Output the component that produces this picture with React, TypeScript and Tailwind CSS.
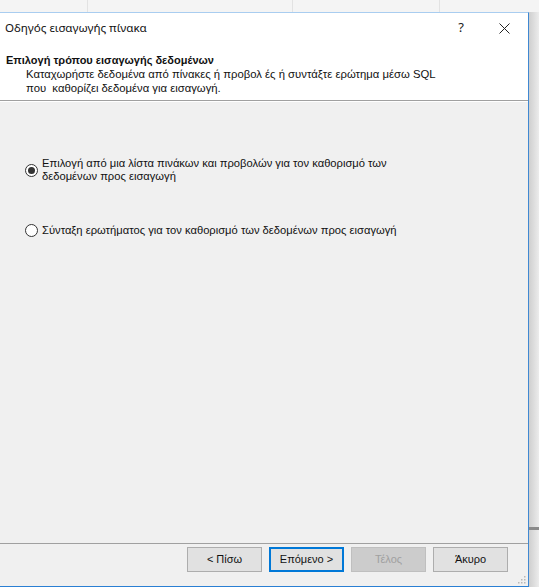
import { useState } from 'react'

const UI = { fontFamily: '"Liberation Sans", Arial, sans-serif' }
const TITLE = { fontFamily: '"Noto Sans", "Liberation Sans", sans-serif' }

function Radio({ checked, onClick }: { checked: boolean; onClick: () => void }) {
  return (
    <button
      onClick={onClick}
      className="flex h-[13px] w-[13px] shrink-0 items-center justify-center rounded-full border border-[#333] bg-white"
    >
      {checked && <span className="block h-[7px] w-[7px] rounded-full bg-[#333]" />}
    </button>
  )
}

function WizButton({
  label,
  primary,
  disabled,
}: {
  label: string
  primary?: boolean
  disabled?: boolean
}) {
  const base = 'h-[25px] w-[75px] text-[11px] leading-none'
  if (disabled)
    return <button className={base + ' border border-[#bfbfbf] bg-[#cccccc] text-[#a0a0a0]'}>{label}</button>
  if (primary)
    return <button className={base + ' border-2 border-[#0078d7] bg-[#e1e1e1] text-[#111]'}>{label}</button>
  return <button className={base + ' border border-[#adadad] bg-[#e1e1e1] text-[#111]'}>{label}</button>
}

export default function App() {
  const [mode, setMode] = useState<'list' | 'sql'>('list')

  return (
    <div className="flex h-[587px] w-[539px] flex-col overflow-hidden bg-[#f3f3f3]" style={UI}>
      {/* spreadsheet behind the dialog */}
      <div className="flex h-[12px] shrink-0 bg-[#f4f4f4]">
        <div className="w-[88px] border-r border-[#e2e2e2]" />
        <div className="w-[205px] border-r border-[#e2e2e2]" />
        <div className="w-[147px] border-r border-[#e2e2e2]" />
        <div className="flex-1" />
      </div>

      <div className="flex min-h-0 flex-1">
        <div className="flex w-[529px] shrink-0 flex-col border-t border-r border-b border-t-[#a9cdf0] border-r-[#3f88d2] border-b-[#2a7fd3] bg-[#f0f0f0]">
          {/* title bar */}
          <div className="flex h-[30px] shrink-0 items-center bg-white pl-[5px]">
            <span className="text-[11.6px] text-[#111]" style={TITLE}>
              Οδηγός εισαγωγής πίνακα
            </span>
            <span className="ml-auto mr-[35px] text-[13px] text-[#222]" style={TITLE}>
              ?
            </span>
            <svg width="11" height="11" viewBox="0 0 11 11" className="mr-[18px]">
              <path d="M0.5 0.5 L10.5 10.5 M10.5 0.5 L0.5 10.5" stroke="#222" strokeWidth="1" />
            </svg>
          </div>

          {/* header */}
          <div className="h-[58px] shrink-0 border-b border-[#a0a0a0] bg-white pl-[6px] pt-[10px] text-[11.3px] leading-[14px] text-[#111]">
            <div className="text-[11px] font-bold">Επιλογή τρόπου εισαγωγής δεδομένων</div>
            <div className="pl-[20px]">
              Καταχωρήστε δεδομένα από πίνακες ή προβολ ές ή συντάξτε ερώτημα μέσω SQL
            </div>
            <div className="pl-[20px]">που&nbsp; καθορίζει δεδομένα για εισαγωγή.</div>
          </div>

          {/* body */}
          <div className="flex flex-1 flex-col border-t border-white pl-[25px] pt-[55px] text-[11.2px] leading-[13px] text-[#111]">
            <div className="flex items-center gap-[4px]">
              <Radio checked={mode === 'list'} onClick={() => setMode('list')} />
              <div>
                Επιλογή από μια λίστα πινάκων και προβολών για τον καθορισμό των
                <br />
                δεδομένων προς εισαγωγή
              </div>
            </div>
            <div className="mt-[41px] flex items-center gap-[4px]">
              <Radio checked={mode === 'sql'} onClick={() => setMode('sql')} />
              <div>Σύνταξη ερωτήματος για τον καθορισμό των δεδομένων προς εισαγωγή</div>
            </div>
          </div>

          {/* footer */}
          <div className="relative h-[43px] shrink-0 border-t border-[#a0a0a0]">
            <div className="flex justify-end gap-[7px] pr-[20px] pt-[3px]">
              <WizButton label="< Πίσω" />
              <WizButton label="Επόμενο >" primary />
              <WizButton label="Τέλος" disabled />
              <WizButton label="Άκυρο" />
            </div>
            <svg width="9" height="9" viewBox="0 0 9 9" className="absolute bottom-[2px] right-[2px]">
              {[
                [7, 1],
                [7, 4],
                [4, 4],
                [7, 7],
                [4, 7],
                [1, 7],
              ].map(([x, y]) => (
                <rect key={`${x}-${y}`} x={x} y={y} width="1.5" height="1.5" fill="#b8b8b8" />
              ))}
            </svg>
          </div>
        </div>

        {/* spreadsheet edge to the right */}
        <div className="relative flex-1 bg-gradient-to-r from-[#cfcfcf] to-[#ececec]">
          <div className="absolute left-0 right-0 top-[515px] h-[3px] bg-[#8a8a8a]" />
        </div>
      </div>
    </div>
  )
}
